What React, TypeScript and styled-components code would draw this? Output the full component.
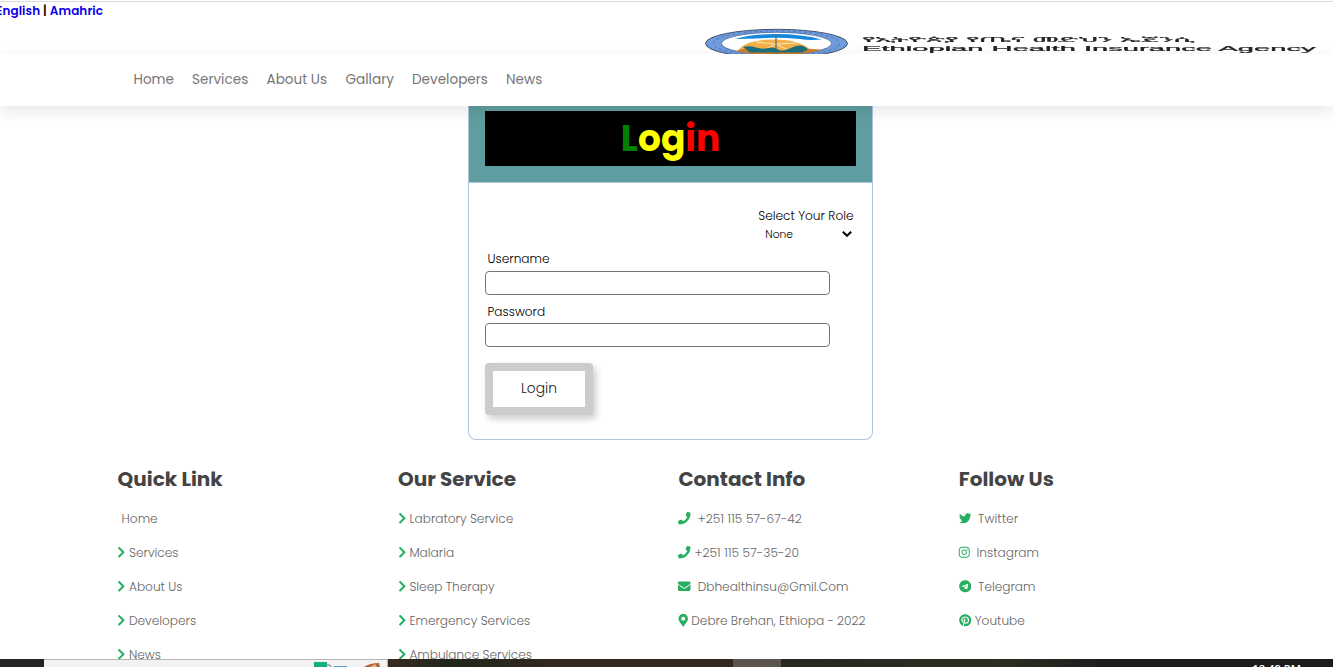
import React from "react";
import styled, { createGlobalStyle } from "styled-components";
import {
  FaChevronRight,
  FaPhone,
  FaEnvelope,
  FaMapMarkerAlt,
  FaTwitter,
  FaInstagram,
  FaTelegram,
  FaPinterest,
} from "react-icons/fa";
import type { IconType } from "react-icons";

const GlobalStyle = createGlobalStyle`
  *, *::before, *::after { box-sizing: border-box; }
  body {
    margin: 0;
    background: #fff;
    overflow: hidden;
    font-family: Poppins, Inter, "Liberation Sans", sans-serif;
  }
`;

const Page = styled.div`
  display: flex;
  flex-direction: column;
  width: 1333px;
  height: 667px;
  overflow: hidden;
`;

const TopBar = styled.header`
  display: flex;
  justify-content: space-between;
  flex: 0 0 53px;
  height: 53px;
  margin-top: 1px;
  border-top: 1px solid #d9dadb;
`;

const Languages = styled.div`
  margin-left: -4px;
  height: 18px;
  font-size: 12px;
  line-height: 18px;
  font-weight: 600;
  letter-spacing: 0.08px;
  white-space: pre;
  color: #200;
`;

const LanguageLink = styled.a`
  color: #0a00e6;
`;

const Banner = styled.svg`
  display: block;
  width: 640px;
  height: 52px;
`;

const Nav = styled.nav`
  position: relative;
  z-index: 1;
  display: flex;
  flex: 0 0 52px;
  align-items: center;
  padding-left: 133.5px;
  background: #fff;
  box-shadow: 0 5px 15px rgba(0, 0, 0, 0.1);
`;

const NavLink = styled.a<{ $w: number }>`
  width: ${(p) => p.$w}px;
  font-size: 13.6px;
  line-height: 20px;
  white-space: nowrap;
  color: #777;
`;

const Card = styled.main`
  display: flex;
  flex-direction: column;
  flex: 0 0 334px;
  width: 405px;
  margin-left: 468px;
  border: 1px solid #b0c4de;
  border-top: 0;
  border-radius: 0 0 8px 8px;
`;

const CardHeader = styled.div`
  flex: 0 0 77px;
  padding: 5px 16px 16px;
  border-bottom: 1px solid #b0c4de;
  background: #5f9ea0;
`;

const Title = styled.h1`
  display: flex;
  align-items: center;
  justify-content: center;
  height: 55px;
  margin: 0;
  background: #000;
  font-size: 36px;
  font-weight: 700;
`;

const TitlePart = styled.span<{ $color: string }>`
  color: ${(p) => p.$color};
`;

const Form = styled.form`
  display: flex;
  flex-direction: column;
  padding: 24px 16px 0;
`;

const Role = styled.div`
  display: flex;
  flex-direction: column;
  width: 98px;
  margin-left: 273.3px;
`;

const Label = styled.label`
  height: 18px;
  font-size: 12.15px;
  line-height: 18px;
  font-weight: 300;
  white-space: nowrap;
  color: #000;
`;

const Select = styled.div`
  display: flex;
  align-items: center;
  justify-content: space-between;
  height: 18px;
  padding: 1px 4px 0 7px;
  font-size: 10.7px;
  font-weight: 300;
  color: #000;

  & > svg {
    margin-bottom: 2px;
  }
`;

const Field = styled.div<{ $gap: number }>`
  display: flex;
  flex-direction: column;
  gap: ${(p) => p.$gap}px;
  margin-top: ${(p) => 10 - p.$gap}px;

  & > label {
    padding-left: 2.5px;
  }
`;

const Input = styled.input`
  width: 345px;
  height: 24px;
  padding: 0 8px;
  border: 1px solid #767676;
  border-radius: 4px;
  background: #fff;
  outline: none;
`;

const Submit = styled.button`
  width: 108px;
  height: 52px;
  margin-top: 16px;
  padding: 0;
  border: 8px solid #ccc;
  border-radius: 4px;
  background: #fff;
  box-shadow: 3px 4px 7px rgba(0, 0, 0, 0.2);
  font: inherit;
  font-size: 13.8px;
  font-weight: 300;
  color: #222;
`;

const Footer = styled.footer`
  display: grid;
  grid-template-columns: repeat(4, 280.4px);
  flex: 0 0 219px;
  height: 219px;
  padding: 24px 0 0 117.6px;
  overflow: hidden;
`;

const Column = styled.section`
  display: flex;
  flex-direction: column;
`;

const Heading = styled.h2`
  height: 30px;
  margin: 0 0 8px;
  font-size: 20px;
  line-height: 30px;
  font-weight: 700;
  color: #444;
`;

const Item = styled.a<{ $gap: number; $ls?: number }>`
  display: flex;
  align-items: center;
  gap: ${(p) => p.$gap}px;
  height: 34px;
  font-size: 12.15px;
  font-weight: 300;
  letter-spacing: ${(p) => p.$ls ?? 0}px;
  white-space: nowrap;
  color: #666;
`;

const Glyph = styled.span<{ $w: number }>`
  display: flex;
  justify-content: center;
  flex: none;
  width: ${(p) => p.$w}px;
  margin-bottom: 1px;
  color: #27ae60;

  & > svg {
    flex: none;
    width: 12.5px;
    height: 12.5px;
  }
`;

const Taskbar = styled.div`
  display: flex;
  justify-content: space-between;
  flex: 0 0 8px;
  height: 8px;
  overflow: hidden;
  background: linear-gradient(90deg, #222426 0 44px, #3a2b22 388px, #20251a 450px, #33291f 560px, #33291f 730px, #262820 790px, #2b2f20 1000px, #1e1e1e 1100px, #1c1c1c);
`;

const SearchBox = styled.svg`
  display: block;
  width: 344px;
  height: 8px;
  margin-left: 44px;
`;

const ActiveApp = styled.div`
  width: 48px;
  margin-left: 345px;
  margin-right: auto;
  background: #59554c;
`;

const Clock = styled.div`
  height: 18px;
  margin: 3px 32px 0 0;
  font-family: "Open Sans", sans-serif;
  font-size: 11.2px;
  line-height: 14px;
  font-weight: 600;
  white-space: nowrap;
  color: #fff;
`;

const NAV: [string, number][] = [
  ["Home", 58.5],
  ["Services", 74.5],
  ["About Us", 79],
  ["Gallary", 66.5],
  ["Developers", 94],
  ["News", 40],
];

type Entry = { text: string; gap: number; w: number; ls?: number; icon?: IconType };

const chevron = (text: string): Entry => ({ text, gap: 3.6, w: 7.8, icon: FaChevronRight });

const COLUMNS: { title: string; items: Entry[] }[] = [
  {
    title: "Quick Link",
    items: [
      { text: "Home", gap: 0, w: 4 },
      chevron("Services"),
      chevron("About Us"),
      chevron("Developers"),
      chevron("News"),
    ],
  },
  {
    title: "Our Service",
    items: [
      chevron("Labratory Service"),
      chevron("Malaria"),
      chevron("Sleep Therapy"),
      chevron("Emergency Services"),
      chevron("Ambulance Services"),
    ],
  },
  {
    title: "Contact Info",
    items: [
      { text: "+251 115 57-67-42", gap: 6.8, w: 12.5, ls: 0.12, icon: FaPhone },
      { text: "+251 115 57-35-20", gap: 3.5, w: 12.5, ls: 0.12, icon: FaPhone },
      { text: "Dbhealthinsu@Gmil.Com", gap: 6.8, w: 12.5, icon: FaEnvelope },
      { text: "Debre Brehan, Ethiopa - 2022", gap: 3.5, w: 9.4, icon: FaMapMarkerAlt },
    ],
  },
  {
    title: "Follow Us",
    items: [
      { text: "Twitter", gap: 6.8, w: 12.5, ls: 0.08, icon: FaTwitter },
      { text: "Instagram", gap: 6.8, w: 11, icon: FaInstagram },
      { text: "Telegram", gap: 6.8, w: 12.5, icon: FaTelegram },
      { text: "Youtube", gap: 3.5, w: 12.5, icon: FaPinterest },
    ],
  },
];

const AgencyBanner = () => (
  <Banner viewBox="693 2 640 52">
    <defs>
      <clipPath id="seal">
        <ellipse cx="776.5" cy="43.5" rx="55" ry="11.4" />
      </clipPath>
      <filter id="soft" x="-5%" y="-20%" width="110%" height="140%">
        <feGaussianBlur stdDeviation="0.7 0.3" />
      </filter>
    </defs>
    <g filter="url(#soft)">
      <ellipse cx="776.5" cy="43.5" rx="71" ry="14.2" fill="#6f9bdc" stroke="#40536f" strokeWidth="1" />
      <ellipse cx="776.5" cy="43.5" rx="63" ry="12.6" fill="none" stroke="#4f79bf" strokeWidth="1" strokeDasharray="3 2.5" />
      <ellipse cx="776.5" cy="43.5" rx="55" ry="11.2" fill="#fff" stroke="#44659c" strokeWidth="0.8" />
      <g clipPath="url(#seal)">
        <path d="M735 39Q750 34 776 34T822 39.500Q808 40.5 800 39Q776 37 756 38.500Z" fill="#1288dc" />
        <path d="M738 51Q744 40 772 39.500T812 51Z" fill="#f3b04a" />
        <path d="M776 44L756 42M776 44L797 43M776 44L764 50M776 44L788 50" stroke="#fbe3b4" strokeWidth="1" />
        <path d="M732 54Q738 48 752 49T776 51Q800 47 824 50V54Z" fill="#d07d2e" />
        <path d="M776 34.500V54" stroke="#5d6f70" strokeWidth="1.3" />
        <path d="M743 47Q750 45.500 756 47.500T768 48T778 49.500T792 47.500T808 49.500L802 52.500H750Z" fill="#1b6f7c" />
      </g>
      <text
        transform="translate(862 42.3) scale(1.9 0.66)"
        fontFamily='"Noto Sans Ethiopic", "Noto Sans", sans-serif'
        fontSize="10"
        fill="#222"
        stroke="#222"
        strokeWidth="0.25"
        textLength="175"
        lengthAdjust="spacingAndGlyphs"
      >
        የኢትዮጵያ የጤና መድህን ኤጀንሲ
      </text>
      <text
        transform="translate(862 50.8) scale(2.4 0.74)"
        fontFamily='"Liberation Sans", sans-serif'
        fontSize="10"
        fill="#222"
        stroke="#222"
        strokeWidth="0.3"
        textLength="189"
        lengthAdjust="spacingAndGlyphs"
      >
        Ethiopian Health Insurance Agency
      </text>
    </g>
  </Banner>
);

const App = () => (
  <>
    <GlobalStyle />
    <Page>
      <TopBar>
        <Languages>
          <LanguageLink>English</LanguageLink> | <LanguageLink>Amahric</LanguageLink>
        </Languages>
        <AgencyBanner />
      </TopBar>
      <Nav>
        {NAV.map(([text, w]) => (
          <NavLink key={text} $w={w}>
            {text}
          </NavLink>
        ))}
      </Nav>
      <Card>
        <CardHeader>
          <Title>
            <TitlePart $color="#008000">L</TitlePart>
            <TitlePart $color="#ffff00">og</TitlePart>
            <TitlePart $color="#ff0000">in</TitlePart>
          </Title>
        </CardHeader>
        <Form>
          <Role>
            <Label>Select Your Role</Label>
            <Select>
              None
              <svg width="10" height="6" viewBox="0 0 10 6" fill="none" stroke="#000" strokeWidth="2">
                <path d="M0.8 0.8L5 4.8L9.2 0.8" />
              </svg>
            </Select>
          </Role>
          <Field $gap={3}>
            <Label>Username</Label>
            <Input />
          </Field>
          <Field $gap={2}>
            <Label>Password</Label>
            <Input type="password" />
          </Field>
          <Submit type="button">Login</Submit>
        </Form>
      </Card>
      <Footer>
        {COLUMNS.map((column) => (
          <Column key={column.title}>
            <Heading>{column.title}</Heading>
            {column.items.map(({ text, gap, w, ls, icon: Icon }) => (
              <Item key={text} $gap={gap} $ls={ls}>
                <Glyph $w={w}>{Icon && <Icon />}</Glyph>
                {text}
              </Item>
            ))}
          </Column>
        ))}
      </Footer>
      <Taskbar>
        <SearchBox viewBox="0 0 344 8">
          <rect width="344" height="8" fill="#f2f2f2" />
          <path d="M0 .5H343.5V8" fill="none" stroke="#b5b5b5" />
          <rect x="270" y="3" width="13" height="5" fill="#12b07c" />
          <path d="M283 6Q287 5 287 8" fill="none" stroke="#777085" />
          <rect x="290" y="7" width="13" height="1" fill="#5a9bd8" />
          <path d="M320 8Q326 4 335 4L336 8Z" fill="#b5622d" />
          <path d="M326 8L331 5L333 8Z" fill="#e2b294" />
        </SearchBox>
        <ActiveApp />
        <Clock>12:49 PM</Clock>
      </Taskbar>
    </Page>
  </>
);

export default App;
